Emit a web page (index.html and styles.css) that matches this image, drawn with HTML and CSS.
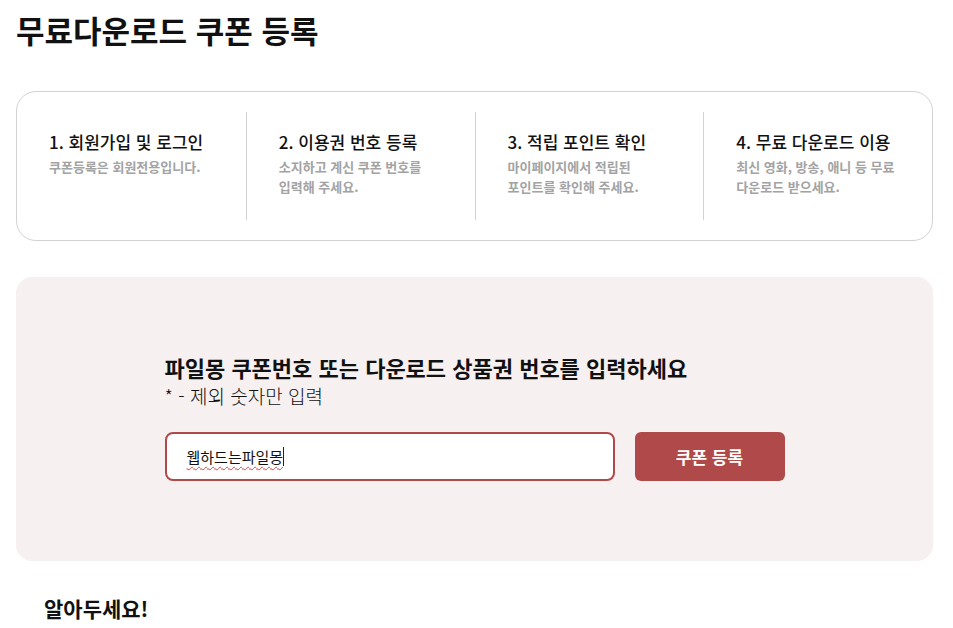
FILE: index.html
```html
<!DOCTYPE html>
<html lang="ko">
<head>
    <meta charset="UTF-8">
    <title>무료다운로드 쿠폰 등록</title>
    <meta name="viewport" content="width=device-width, initial-scale=1">
    <link rel="stylesheet" href="styles.css">
</head>
<body>
    <div class="page">
        <h1 class="page-title">무료다운로드 쿠폰 등록</h1>

        <ul class="steps">
            <li class="step">
                <h3>1. 회원가입 및 로그인</h3>
                <p>쿠폰등록은 회원전용입니다.</p>
            </li>
            <li class="step">
                <h3>2. 이용권 번호 등록</h3>
                <p>소지하고 계신 쿠폰 번호를<br>입력해 주세요.</p>
            </li>
            <li class="step">
                <h3>3. 적립 포인트 확인</h3>
                <p>마이페이지에서 적립된<br>포인트를 확인해 주세요.</p>
            </li>
            <li class="step">
                <h3>4. 무료 다운로드 이용</h3>
                <p>최신 영화, 방송, 애니 등 무료<br>다운로드 받으세요.</p>
            </li>
        </ul>

        <section class="coupon">
            <form class="coupon-form" id="couponForm">
                <h2>파일몽 쿠폰번호 또는 다운로드 상품권 번호를 입력하세요</h2>
                <p class="hint">* - 제외 숫자만 입력</p>
                <div class="coupon-row">
                    <div class="coupon-input"><span class="typed">웹하드는파일몽</span><span class="caret"></span></div>
                    <button type="submit" class="coupon-btn">쿠폰 등록</button>
                </div>
            </form>
        </section>

        <h2 class="notice-title">알아두세요!</h2>
    </div>
</body>
</html>
```

FILE: styles.css
```css
:root {
    --text: #111;
    --muted: #a3a3a3;
    --line: #d2d2d2;
    --pink: #f7f0f0;
    --red: #b04a4a;
}
* {
    box-sizing: border-box;
}
body {
    margin: 0;
    background: #fff;
    color: var(--text);
    font-family: "Noto Sans CJK KR", "Noto Sans", sans-serif;
}
.page {
    padding: 0 20px 0 16px;
}
.page-title {
    margin: 0;
    padding-top: 9px;
    font-size: 31px;
    line-height: 42px;
    font-weight: 700;
}
.steps {
    list-style: none;
    margin: 40px 0 0 0;
    padding: 20px 0;
    display: grid;
    grid-template-columns: repeat(4, 1fr);
    border: 1px solid var(--line);
    border-radius: 20px;
}
.step {
    height: 108px;
    padding: 19px 10px 0 32px;
    border-left: 1px solid var(--line);
}
.step:first-child {
    border-left: none;
}
.step h3 {
    margin: 0 0 4px 0;
    font-size: 17px;
    line-height: 22px;
    font-weight: 500;
}
.step p {
    margin: 0;
    font-size: 13px;
    line-height: 20px;
    font-weight: 700;
    color: var(--muted);
}
.coupon {
    margin-top: 36px;
    background: var(--pink);
    border-radius: 16px;
    padding: 77px 0 80px 0;
    display: flex;
    justify-content: center;
}
.coupon-form {
    width: 620px;
}
.coupon-form h2 {
    margin: 0;
    font-size: 22px;
    line-height: 26px;
    font-weight: 700;
    white-space: nowrap;
}
.hint {
    margin: 2px 0 0 0;
    font-size: 19px;
    line-height: 28px;
    font-weight: 300;
}
.coupon-row {
    margin-top: 22px;
    display: flex;
    gap: 20px;
}
.coupon-input {
    flex: 1;
    height: 49px;
    background: #fff;
    border: 2px solid var(--red);
    border-radius: 8px;
    padding: 0 20px;
    display: flex;
    align-items: center;
    font-size: 15px;
}
.typed {
    text-decoration: underline wavy #e04040;
    text-decoration-thickness: 1px;
    text-underline-offset: 3px;
}
.caret {
    width: 1px;
    height: 19px;
    background: #222;
}
.coupon-btn {
    width: 150px;
    height: 49px;
    border: none;
    border-radius: 6px;
    background: var(--red);
    color: #fff;
    font-family: inherit;
    font-size: 17px;
    font-weight: 700;
    cursor: pointer;
}
.notice-title {
    margin: 33px 0 0 28px;
    font-size: 21px;
    line-height: 28px;
    font-weight: 700;
}
```
